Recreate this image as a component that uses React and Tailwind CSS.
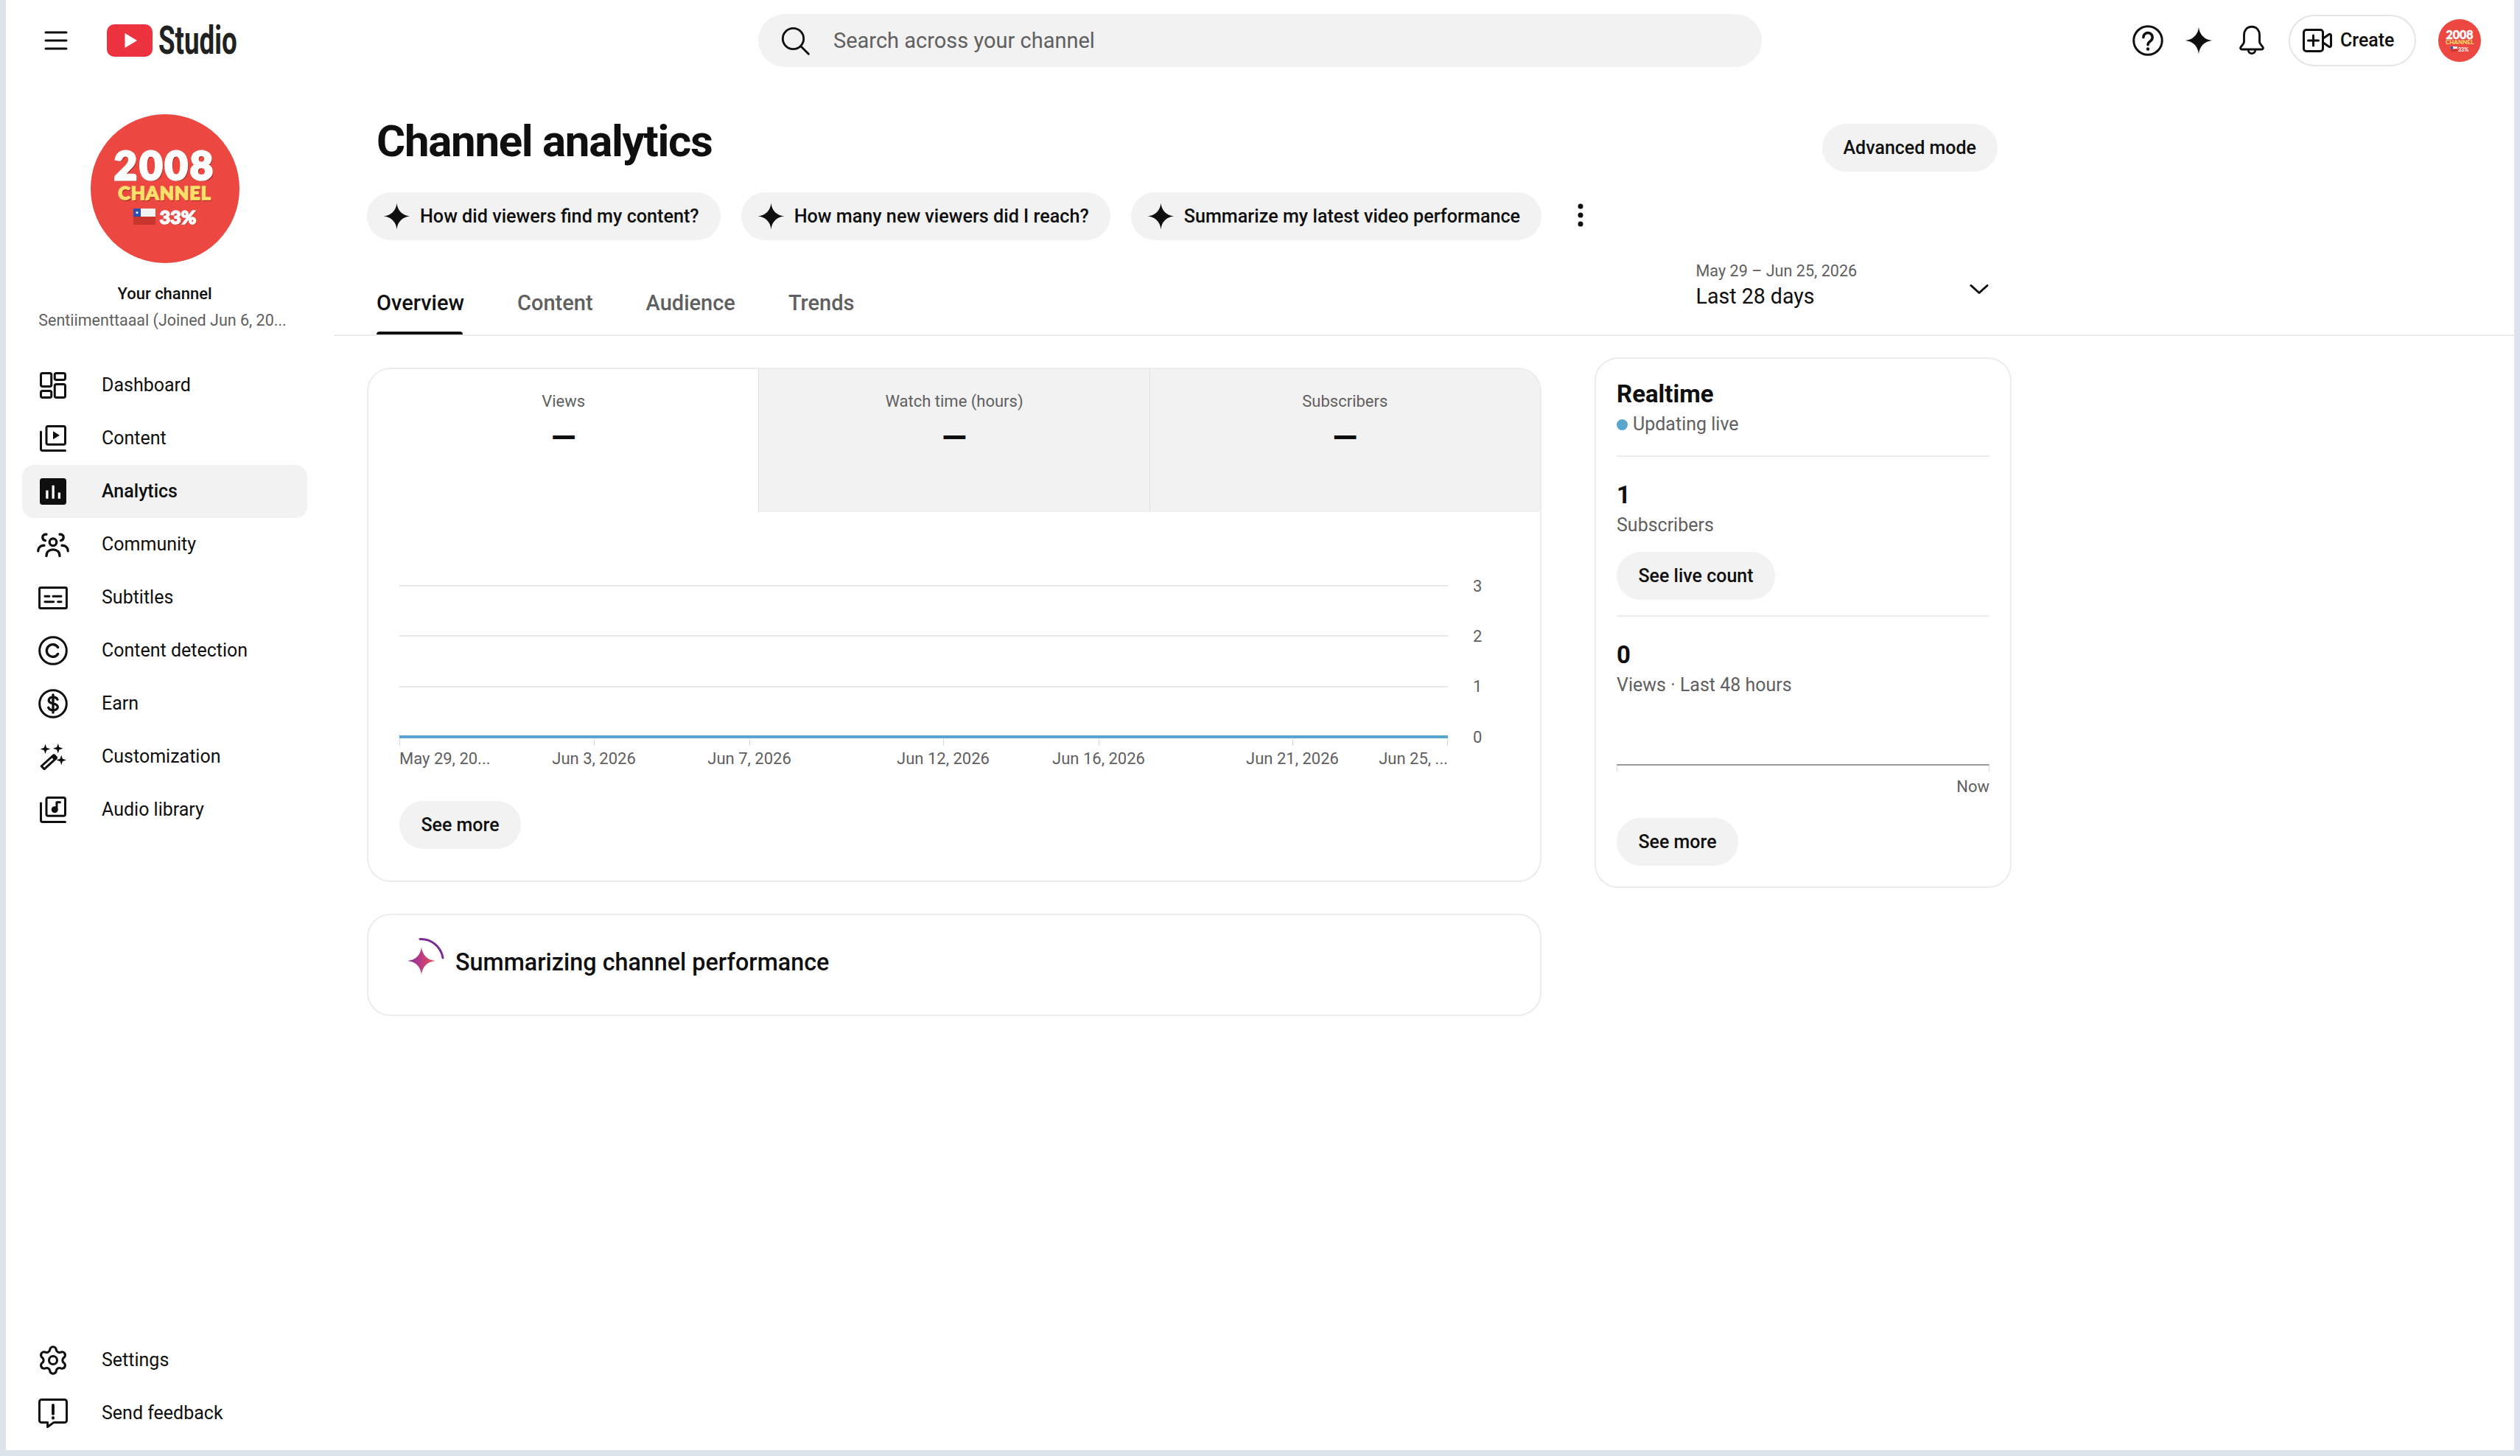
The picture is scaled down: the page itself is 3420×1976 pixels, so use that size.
import React from "react";
import { Settings as Gear } from "lucide-react";

const S = { fill: "none", stroke: "#0f0f0f", strokeWidth: 2, strokeLinecap: "round", strokeLinejoin: "round" };
const Star = ({ className }) => (
  <svg viewBox="0 0 24 24" className={className}>
    <path d="M12 0.5C12.6 7 17 11.4 23.5 12C17 12.6 12.6 17 12 23.5C11.4 17 7 12.6 0.5 12C7 11.4 11.4 7 12 0.5Z" fill="#0f0f0f" />
  </svg>
);
const Dashboard = () => (
  <svg viewBox="0 0 24 24" className="w-9 h-9" {...S}>
    <rect x="1" y="1" width="9.5" height="12" rx="1.5" /><rect x="13.5" y="1" width="9.5" height="6" rx="1.5" />
    <rect x="1" y="17" width="9.5" height="6" rx="1.5" /><rect x="13.5" y="11" width="9.5" height="12" rx="1.5" />
  </svg>
);
const Content = () => (
  <svg viewBox="0 0 24 24" className="w-9 h-9" {...S}>
    <rect x="6" y="1" width="17" height="16.5" rx="1.5" /><path d="M1 6v15.5a1.5 1.5 0 0 0 1.5 1.5H23" />
    <path d="M12 5.5l6 3.7-6 3.7z" fill="#0f0f0f" stroke="none" />
  </svg>
);
const Analytics = () => (
  <svg viewBox="0 0 24 24" className="w-9 h-9">
    <rect x="0" y="0" width="24" height="24" rx="2.5" fill="#0f0f0f" />
    <path d="M5.5 11h2.2v7.5H5.5zM11 6.5h2.2v12H11zM16.5 13h2.2v5.5h-2.2z" fill="#fff" />
  </svg>
);
const Community = () => (
  <svg viewBox="0 0 29 22" className="w-[44px] h-[33px]" {...S} strokeWidth="2.2">
    <circle cx="14.5" cy="8.5" r="3.2" /><path d="M8.5 21c0-3.8 2.8-5.7 6-5.7s6 1.9 6 5.7" />
    <path d="M8.5 1.5C6.5 1.2 5 2.5 5 4.2c0 1.5 1 2.6 2.5 2.9" /><path d="M20.5 1.5c2-.3 3.5 1 3.5 2.7 0 1.5-1 2.6-2.5 2.9" />
    <path d="M1 16.5c0-3 2.3-5 5.5-5" /><path d="M28 16.5c0-3-2.3-5-5.5-5" />
  </svg>
);
const Subtitles = () => (
  <svg viewBox="0 0 27 21" className="w-[40px] h-[31px]" {...S}>
    <rect x="1" y="1" width="25" height="19" rx="1.2" /><path d="M6 9h4M13.5 9H21M6 14h8M18 14h3" />
  </svg>
);
const Copyright = () => (
  <svg viewBox="0 0 24 24" className="w-[40px] h-[40px]" {...S} strokeWidth="1.8">
    <circle cx="12" cy="12" r="11" /><path d="M16 9.3a5 5 0 1 0 0 5.4" strokeWidth="2" />
  </svg>
);
const Earn = () => (
  <svg viewBox="0 0 24 24" className="w-[40px] h-[40px]" {...S} strokeWidth="1.8">
    <circle cx="12" cy="12" r="11" />
    <path d="M15.6 8.6c-.5-1.2-1.8-1.9-3.6-1.9-2 0-3.5 1-3.5 2.6 0 3.6 7.3 1.7 7.3 5.4 0 1.6-1.6 2.6-3.8 2.6-1.8 0-3.2-.8-3.8-2.2M12 4.8v14.4" strokeWidth="2" />
  </svg>
);
const Wand = () => (
  <svg viewBox="0 0 24 24" className="w-9 h-9" fill="#0f0f0f">
    <path d="M5 0.5l1.1 3.4 3.4 1.1-3.4 1.1L5 9.5 3.9 6.100.5 5l3.400-1.100zM16.500 0l1.100 3.400 3.400 1.100-3.400 1.100-1.100 3.400-1.100-3.400L12 4.500l3.400-1.100zM19.500 10.500l1.100 3.400 3.400 1.100-3.400 1.100-1.100 3.400-1.100-3.400-3.400-1.100 3.400-1.100z" />
    <path d="M1.500 20.500L12.500 10.500l2.500 2.800L4 23.200z" fill="none" stroke="#0f0f0f" strokeWidth="2" strokeLinejoin="round" />
    <path d="M10.500 12.300l3-2.800 2.500 2.800-3 2.800z" />
  </svg>
);
const Audio = () => (
  <svg viewBox="0 0 24 24" className="w-9 h-9" {...S}>
    <rect x="6" y="1" width="17" height="16.5" rx="1.5" /><path d="M1 6v15.5a1.5 1.5 0 0 0 1.5 1.5H23" />
    <circle cx="13.5" cy="11.8" r="2" fill="#0f0f0f" /><path d="M15.300 11.500V5.200h3" />
  </svg>
);
const Feedback = () => (
  <svg viewBox="0 0 27 27" className="w-[40px] h-[40px]" {...S}>
    <path d="M3 1h21a2 2 0 0 1 2 2v17a2 2 0 0 1-2 2H14l-5.500 4v-4H3a2 2 0 0 1-2-2V3a2 2 0 0 1 2-2z" />
    <path d="M13.500 6v8M13.500 17.500v.5" strokeWidth="2.600" />
  </svg>
);

const Avatar = ({ big }) => big ? (
  <div className="w-[202px] h-[202px] rounded-full bg-[#ec4740] flex flex-col items-center justify-center pb-[2px]">
    <div className="font-['Lato'] font-black text-[54px] leading-[42px] text-white tracking-[3px] [-webkit-text-stroke:3px_#fff] [text-shadow:2px_2px_0_#a32a24]">2008</div>
    <div className="font-['Lato'] font-black text-[25px] leading-[22px] mt-[5px] text-[#fadf6b] tracking-[1px] [-webkit-text-stroke:1.500px_#fadf6b] [text-shadow:1px_2px_0_#a32a24]">CHANNEL</div>
    <div className="flex items-center gap-[6px] mt-[9px]">
      <svg viewBox="0 0 30 22" className="w-[30px] h-[22px]">
        <rect width="30" height="11" fill="#f2f2f2" /><rect y="11" width="30" height="11" fill="#c8352c" /><rect width="10" height="11" fill="#2a4fb0" /><circle cx="5" cy="5.500" r="1.600" fill="#fff" />
      </svg>
      <span className="font-['Lato'] font-black text-[25px] leading-[26px] text-white [-webkit-text-stroke:1.500px_#fff] [text-shadow:1px_1px_0_#a32a24]">33%</span>
    </div>
  </div>
) : (
  <div className="w-[58px] h-[58px] rounded-full bg-[#ec4740] flex flex-col items-center justify-center">
    <div className="font-['Lato'] font-black text-[16px] leading-[13px] text-white [-webkit-text-stroke:0.500px_#fff]">2008</div>
    <div className="font-['Lato'] font-black text-[8px] leading-[9px] text-[#fadf6b]">CHANNEL</div>
    <div className="flex items-center gap-[1px] mt-[1px]">
      <svg viewBox="0 0 30 22" className="w-[9px] h-[7px]">
        <rect width="30" height="11" fill="#f2f2f2" /><rect y="11" width="30" height="11" fill="#c8352c" /><rect width="10" height="11" fill="#2a4fb0" />
      </svg>
      <span className="font-['Lato'] font-black text-[7px] leading-[8px] text-white">33%</span>
    </div>
  </div>
);

const nav = [
  ["Dashboard", Dashboard], ["Content", Content], ["Analytics", Analytics, true], ["Community", Community],
  ["Subtitles", Subtitles], ["Content detection", Copyright], ["Earn", Earn], ["Customization", Wand], ["Audio library", Audio],
];
const NavItem = ({ label, Icon, active }) => (
  <div className={`h-[72px] w-[387px] rounded-[16px] flex items-center ${active ? "bg-[#f2f2f2] font-medium" : ""}`}>
    <div className="w-[84px] flex justify-center shrink-0"><Icon /></div>
    <span className="ml-[24px] text-[25px] text-[#0f0f0f]">{label}</span>
  </div>
);
const Pill = ({ children, className = "" }) => (
  <div className={`h-[65px] px-[29px] rounded-full bg-[#f2f2f2] flex items-center text-[25px] font-medium text-[#0f0f0f] whitespace-nowrap ${className}`}>{children}</div>
);
const Chip = ({ children }) => (
  <div className="h-[65px] pl-[22px] pr-[29px] rounded-full bg-[#f2f2f2] flex items-center gap-[13px] text-[25.200px] font-medium text-[#0f0f0f] whitespace-nowrap">
    <Star className="w-[37px] h-[37px]" />{children}
  </div>
);
const Metric = ({ label, active }) => (
  <div className={`flex-1 flex flex-col items-center pt-[32px] ${active ? "bg-white" : "bg-[#f2f2f2] border-l border-[#e0e0e0]"}`}>
    <div className="text-[22px] leading-[28px] text-[#606060]">{label}</div>
    <div className="text-[44px] leading-[48px] mt-[11px] font-bold text-[#0f0f0f]">—</div>
  </div>
);
const Row = ({ n }) => (
  <div className="h-[20px] flex items-center">
    <div className="w-[1423px] h-[2px] bg-[#e8e8e8]" />
    <div className="ml-[34px] text-[22px] text-[#606060]">{n}</div>
  </div>
);
const Tick = ({ label, ml, align = "items-center" }) => (
  <div className={`w-0 flex flex-col ${align} ${ml}`}>
    <div className="w-[1px] h-[9px] bg-[#d8d8d8] shrink-0" />
    <div className="mt-[4px] text-[22px] leading-[28px] text-[#606060] whitespace-nowrap">{label}</div>
  </div>
);

export default function App() {
  return (
    <div className="w-[3420px] h-[1976px] bg-[#dce3eb] px-2 pb-2 font-['Roboto',sans-serif] overflow-hidden">
      <div className="w-full h-full bg-white flex flex-col">
        <header className="h-[110px] shrink-0 flex items-center">
          <svg viewBox="0 0 32 26" className="ml-[52px] w-[32px] h-[26px]" stroke="#0f0f0f" strokeWidth="3" strokeLinecap="round">
            <path d="M2 2h28M2 13h28M2 24h28" />
          </svg>
          <svg viewBox="0 0 62 44" className="ml-[53px] w-[62px] h-[44px]">
            <rect width="62" height="44" rx="10" fill="#ee3340" /><path d="M24.500 12l16.500 10-16.500 10z" fill="#fff" />
          </svg>
          <div className="ml-[8px] w-[106px] text-[54px] leading-none font-bold text-[#212121] origin-left scale-x-[0.68] whitespace-nowrap">Studio</div>
          <div className="ml-[708px] w-[1362px] h-[72px] rounded-full bg-[#f2f2f2] flex items-center">
            <svg viewBox="0 0 24 24" className="ml-[30px] w-[40px] h-[40px]" {...S} strokeWidth="1.700">
              <circle cx="10.500" cy="10.500" r="8.500" /><path d="M16.800 16.800L23 23" />
            </svg>
            <span className="ml-[32px] mt-[1px] text-[29px] text-[#606060]">Search across your channel</span>
          </div>
          <svg viewBox="0 0 24 24" className="ml-[503px] w-[42px] h-[42px]" {...S} strokeWidth="1.700">
            <circle cx="12" cy="12" r="11" /><path d="M8.500 9.500a3.500 3.500 0 1 1 5.600 2.800c-1.300 1-2.100 1.500-2.100 3" strokeWidth="2" /><path d="M12 18.500v.1" strokeWidth="2.500" />
          </svg>
          <Star className="ml-[29px] w-[38px] h-[38px]" />
          <svg viewBox="0 0 24 28" className="ml-[35px] w-[36px] h-[44px]" {...S} strokeWidth="1.900">
            <path d="M12 1.500C7.500 1.500 5 5 5 9v6c0 2-2 3.500-3 5-.6 1 0 2 1 2h18c1 0 1.600-1 1-2-1-1.500-3-3-3-5V9c0-4-2.500-7.500-7-7.500z" /><path d="M8.800 22.500a3.200 3.200 0 0 0 6.400 0" />
          </svg>
          <div className="ml-[32px] w-[173px] h-[70px] rounded-full border-2 border-[#e5e5e5] flex items-center pl-[17px] shrink-0">
            <svg viewBox="0 0 40 32" className="w-[40px] h-[32px]" {...S} strokeWidth="3">
              <rect x="1.500" y="1.500" width="26" height="29" rx="3.500" /><path d="M14.500 9v14M7.500 16h14" /><path d="M28 13l8-5.500c1-.5 2.500 0 2.500 1.500v14c0 1.500-1.500 2-2.500 1.500L28 19" />
            </svg>
            <span className="ml-[11px] text-[25px] font-medium text-[#0f0f0f]">Create</span>
          </div>
          <div className="ml-[30px]"><Avatar /></div>
        </header>
        <div className="flex-1 flex min-h-0">
          <aside className="w-[448px] shrink-0 flex flex-col pl-[22px]">
            <div className="w-[387px] flex flex-col items-center pt-[45px]">
              <Avatar big />
              <div className="mt-[28px] text-[22px] leading-[28px] font-medium text-[#0f0f0f]">Your channel</div>
              <div className="mt-[8px] text-[21.500px] leading-[28px] text-[#606060] whitespace-nowrap -ml-[6px]">Sentiimenttaaal (Joined Jun 6, 20...</div>
            </div>
            <nav className="mt-[38px] flex flex-col">
              {nav.map(([l, I, a]) => <NavItem key={l} label={l} Icon={I} active={a} />)}
            </nav>
            <div className="mt-auto mb-[14px] flex flex-col">
              <NavItem label="Settings" Icon={() => <Gear size={44} strokeWidth={1.7} color="#0f0f0f" />} />
              <NavItem label="Send feedback" Icon={Feedback} />
            </div>
          </aside>
          <main className="flex-1 min-w-0 flex flex-col">
            <div className="w-[2255px] pl-[55px] pt-[50px] flex items-start justify-between">
              <h1 className="text-[60px] leading-[64px] font-bold tracking-[-1.300px] text-[#0f0f0f]">Channel analytics</h1>
              <Pill className="mt-[8px]">Advanced mode</Pill>
            </div>
            <div className="pl-[42px] mt-[28px] flex items-center gap-[28px]">
              <Chip>How did viewers find my content?</Chip>
              <Chip>How many new viewers did I reach?</Chip>
              <Chip>Summarize my latest video performance</Chip>
              <svg viewBox="0 0 10 32" className="ml-[20px] w-[10px] h-[32px] -mt-[4px]" fill="#0f0f0f">
                <circle cx="5" cy="4" r="3.500" /><circle cx="5" cy="16" r="3.500" /><circle cx="5" cy="28" r="3.500" />
              </svg>
            </div>
            <div className="h-[130px] shrink-0 -ml-[3px] border-b-2 border-[#ececec] flex">
              <div className="pl-[58px] flex gap-[72px] items-end">
                <div className="h-[63px] flex flex-col justify-between text-[29px] leading-[40px] font-medium text-[#0f0f0f]">
                  <span>Overview</span><div className="h-[4px] bg-[#0f0f0f] rounded-t-sm mr-[2px]" />
                </div>
                <div className="h-[63px] text-[29px] leading-[40px] font-medium text-[#606060]">Content</div>
                <div className="h-[63px] text-[29px] leading-[40px] font-medium text-[#606060]">Audience</div>
                <div className="h-[63px] text-[29px] leading-[40px] font-medium text-[#606060]">Trends</div>
              </div>
              <div className="ml-[1142px] pt-[28px] w-[240px]">
                <div className="text-[21.600px] leading-[28px] text-[#606060] whitespace-nowrap">May 29 – Jun 25, 2026</div>
                <div className="text-[28.600px] leading-[36px] mt-[2px] text-[#0f0f0f] whitespace-nowrap">Last 28 days</div>
              </div>
              <svg viewBox="0 0 26 14" className="ml-[132px] mt-[59px] w-[26px] h-[15px]" {...S} strokeWidth="3"><path d="M2 2l11 10L24 2" /></svg>
            </div>
            <div className="flex items-start pl-[42px] pt-[29px]">
              <div className="w-[1594px] mt-[14px] flex flex-col gap-[43px]">
                <section className="h-[698px] border-2 border-[#ececec] rounded-[32px] overflow-hidden">
                  <div className="h-[196px] flex -mt-[2px]">
                    <Metric label="Views" active /><Metric label="Watch time (hours)" /><Metric label="Subscribers" />
                  </div>
                  <div className="pl-[42px] pt-[90px]">
                    <div className="flex flex-col gap-[48.400px]"><Row n="3" /><Row n="2" /><Row n="1" /><Row n="0" /></div>
                    <div className="relative w-[1423px] -mt-[12px] h-[4px] bg-[#58a5cd]" />
                    <div className="w-[1423px] flex pt-[1px]">
                      <Tick label="May 29, 20..." align="items-start" />
                      <Tick label="Jun 3, 2026" ml="ml-[264px]" />
                      <Tick label="Jun 7, 2026" ml="ml-[211px]" />
                      <Tick label="Jun 12, 2026" ml="ml-[263px]" />
                      <Tick label="Jun 16, 2026" ml="ml-[211px]" />
                      <Tick label="Jun 21, 2026" ml="ml-[263px]" />
                      <Tick label="Jun 25, ..." ml="ml-auto" align="items-end" />
                    </div>
                    <Pill className="mt-[43px] w-[165px] justify-center !px-0">See more</Pill>
                  </div>
                </section>
                <section className="h-[139px] border-2 border-[#ececec] rounded-[32px] flex items-start pl-[50px] pt-[28px]">
                  <svg viewBox="0 0 60 60" className="w-[60px] h-[60px]">
                    <defs><linearGradient id="g" x1="0" x2="1"><stop offset="0" stopColor="#8a2aa5" /><stop offset="1" stopColor="#ee4f58" /></linearGradient></defs>
                    <path d="M22 15C23 26 30 33 41 34C30 35 23 42 22 53C21 42 14 35 3 34C14 33 21 26 22 15Z" fill="url(#g)" />
                    <path d="M20 4.500A30 30 0 0 1 51 30" fill="none" stroke="#7d2a93" strokeWidth="3" strokeLinecap="round" />
                  </svg>
                  <div className="ml-[8px] mt-[16px] text-[32.300px] leading-[40px] font-medium text-[#0f0f0f]">Summarizing channel performance</div>
                </section>
              </div>
              <section className="ml-[72px] w-[566px] h-[720px] border-2 border-[#ececec] rounded-[32px] px-[28px] pt-[28px]">
                <div className="text-[33px] leading-[40px] font-bold text-[#0f0f0f]">Realtime</div>
                <div className="flex items-center mt-[3px] h-[36px]">
                  <div className="w-[15px] h-[15px] rounded-full bg-[#58a5cd]" />
                  <span className="ml-[7px] text-[25px] text-[#606060]">Updating live</span>
                </div>
                <div className="h-[2px] bg-[#ececec] mt-[24px]" />
                <div className="mt-[32px] text-[33px] leading-[40px] font-bold text-[#0f0f0f]">1</div>
                <div className="mt-[3px] text-[25px] leading-[36px] text-[#606060]">Subscribers</div>
                <Pill className="mt-[18px] w-[215px] justify-center !px-0">See live count</Pill>
                <div className="h-[2px] bg-[#ececec] mt-[21px]" />
                <div className="mt-[32px] text-[33px] leading-[40px] font-bold text-[#0f0f0f]">0</div>
                <div className="mt-[3px] text-[25px] leading-[36px] text-[#606060]">Views · Last 48 hours</div>
                <div className="mt-[89px] h-[10px] border-t-2 border-x border-[#9a9a9a] border-x-[#d8d8d8]" />
                <div className="text-right text-[22px] leading-[28px] mt-[7px] text-[#606060]">Now</div>
                <Pill className="mt-[28px] w-[165px] justify-center !px-0">See more</Pill>
              </section>
            </div>
          </main>
        </div>
      </div>
    </div>
  );
}
